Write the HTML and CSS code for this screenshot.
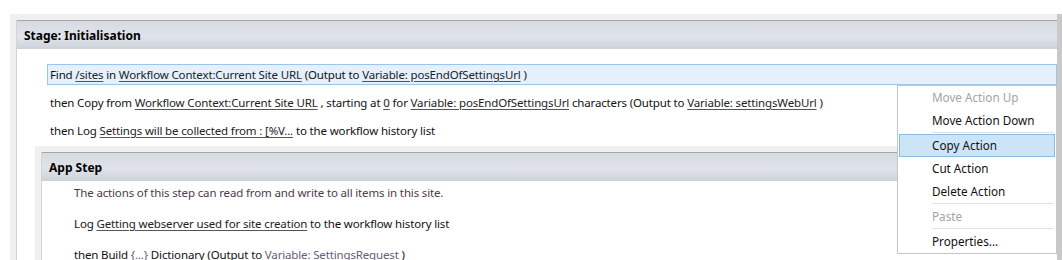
FILE: index.html
```html
<!DOCTYPE html>
<html lang="en">
<head>
    <meta charset="UTF-8">
    <title>Workflow designer</title>
    <link rel="stylesheet" href="styles.css">
</head>
<body>
    <div class="designer">
        <div class="frame">
            <section class="stage">
                <div class="stage-head">Stage: Initialisation</div>
                <div class="stage-body">
                    <div class="actions">
                        <div class="action selected">Find <a href="#">/sites</a> in <a href="#">Workflow Context:Current Site URL</a> (Output to <a href="#">Variable: posEndOfSettingsUrl</a> )</div>
                        <div class="action">then Copy from <a href="#">Workflow Context:Current Site URL</a> , starting at <a href="#">0</a> for <a href="#">Variable: posEndOfSettingsUrl</a> characters (Output to <a href="#">Variable: settingsWebUrl</a> )</div>
                        <div class="action">then Log <a href="#">Settings will be collected from : [%V...</a> to the workflow history list</div>
                    </div>

                    <div class="step-wrap">
                        <section class="step">
                            <div class="step-head">App Step</div>
                            <div class="step-body">
                                <div class="action desc">The actions of this step can read from and write to all items in this site.</div>
                                <div class="action">Log <a href="#">Getting webserver used for site creation</a> to the workflow history list</div>
                                <div class="action">then Build <a href="#" class="muted">{...}</a> Dictionary (Output to <a href="#" class="muted">Variable: SettingsRequest</a> )</div>
                            </div>
                        </section>
                    </div>
                </div>
            </section>
        </div>

        <!-- right click menu on the selected action -->
        <ul class="context-menu">
            <li class="disabled">Move Action Up</li>
            <li>Move Action Down</li>
            <li class="sep"></li>
            <li class="hover">Copy Action</li>
            <li>Cut Action</li>
            <li>Delete Action</li>
            <li class="sep"></li>
            <li class="disabled">Paste</li>
            <li class="sep"></li>
            <li>Properties...</li>
        </ul>
    </div>
</body>
</html>
```

FILE: styles.css
```css
body {
    margin: 0;
    background: #fff;
    font-family: "Noto Sans", "Open Sans", sans-serif;
    font-size: 12px;
    color: #111;
    overflow: hidden;
}

.designer {
    position: relative;
    height: 260px;
    padding-top: 14px;
    box-sizing: border-box;
}

.frame {
    height: 100%;
    margin-left: 10px;
    padding: 6px 0 0 6px;
    box-sizing: border-box;
    background: #f0f0f0;
    border-right: 5px solid #c9c9c9;
}

.stage {
    height: 100%;
    background: #fff;
    border-left: 1px solid #d4d4d4;
}

.stage-head,
.step-head {
    height: 28px;
    line-height: 30px;
    padding-left: 7px;
    border-top: 1px solid #a5a5a5;
    background: linear-gradient(#d6dae1, #e0e4ea 55%, #cdd2d9);
    font-weight: bold;
    color: #000;
}

.stage-body {
    padding-top: 15px;
}

.actions {
    display: flex;
    flex-direction: column;
    gap: 7px;
    padding-left: 30px;
}

.action {
    height: 21px;
    line-height: 19px;
    padding: 0 2px;
    border: 1px solid transparent;
    box-sizing: border-box;
    white-space: nowrap;
    font-size: 11.5px;
    letter-spacing: -0.15px;
}

.action a {
    color: #222;
    text-decoration: underline;
    text-decoration-color: #555;
    text-underline-offset: 2px;
}

.action a.muted {
    color: #6a5a78;
}

.action.selected {
    background: #e5f0fc;
    border-color: #99c6ec;
}

.action.desc {
    color: #4e3a4c;
}

/* nested step */
.step-wrap {
    margin: 5px 0 0 18px;
    padding: 6px 0 0 6px;
    background: #f0f0f0;
}

.step {
    background: #fff;
    border-left: 1px solid #d4d4d4;
    height: 140px;
}

.step-body {
    display: flex;
    flex-direction: column;
    gap: 10px;
    padding: 1px 0 0 29px;
}

/* context menu */
.context-menu {
    position: absolute;
    left: 897px;
    top: 85px;
    width: 158px;
    margin: 0;
    padding: 0;
    list-style: none;
    background: #fff;
    border: 1px solid #c6c6c6;
    font-size: 11.7px;
}

.context-menu li {
    height: 23px;
    line-height: 21px;
    margin: 0 1px;
    padding-left: 32px;
    border: 1px solid transparent;
    box-sizing: border-box;
    color: #111;
}

.context-menu li.disabled {
    color: #a3a3a3;
}

.context-menu li.hover {
    background: #cce4f7;
    border-color: #88bce8;
}

.context-menu li.sep {
    height: 2px;
    margin: 0 2px 0 34px;
    padding: 0;
    border: 0;
    border-top: 1px solid #e2e2e2;
}
```
